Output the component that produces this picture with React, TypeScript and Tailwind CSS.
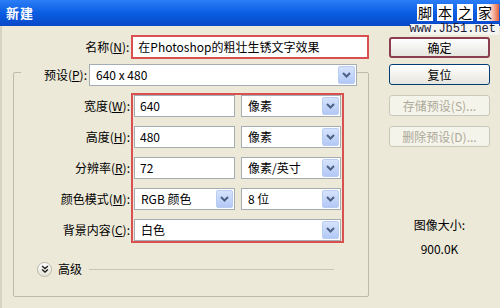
import React from "react";

const font = { fontFamily: '"Noto Sans CJK SC", "Noto Sans", sans-serif' };

function Arrow() {
    return (
        <div className="absolute right-[1px] top-[1px] bottom-[1px] w-[17px] rounded-[2px] bg-gradient-to-b from-[#D6E3FC] to-[#B2C8F5] border border-[#B9CCF2] flex items-center justify-center">
            <svg width="9" height="6" viewBox="0 0 9 6">
                <path d="M1 1 L4.5 4.5 L8 1" stroke="#4D6185" strokeWidth="2" fill="none" />
            </svg>
        </div>
    );
}

function Select({ value, w }: { value: string; w: string }) {
    return (
        <div className={`relative h-[22px] ${w} bg-white border border-[#A5ACB2] flex items-center pl-[6px] text-[12px] text-black`}>
            {value}
            <Arrow />
        </div>
    );
}

function Field({ value }: { value: string }) {
    return (
        <div className="h-[22px] w-[101px] bg-white border border-[#A5ACB2] flex items-center pl-[5px] text-[12px] text-black">
            {value}
        </div>
    );
}

function Label({ text, k }: { text: string; k: string }) {
    return (
        <div className="h-[22px] flex items-center justify-end text-[12px] text-black">
            {text}(<span className="underline">{k}</span>):
        </div>
    );
}

function XpButton({ children, disabled, primary }: { children: React.ReactNode; disabled?: boolean; primary?: boolean }) {
    if (disabled) {
        return (
            <div className="h-[21px] w-[101px] rounded-[3px] border border-[#CAC8BB] bg-[#F5F4EA] flex items-center justify-center text-[12px] text-[#ACA899]">
                {children}
            </div>
        );
    }
    return (
        <div className={`h-[21px] w-[101px] rounded-[3px] ${primary ? "border-2 border-[#8A3E50]" : "border border-[#003C74]"} bg-gradient-to-b from-white to-[#E6E5DE] flex items-center justify-center text-[12px] text-black`}>
            {children}
        </div>
    );
}

export default function App() {
    return (
        <div className="w-[500px] h-[308px] overflow-hidden relative bg-[#ECE9D8]" style={font}>
            {/* title bar */}
            <div className="h-[26px] bg-gradient-to-b from-[#2B7DF7] via-[#0A5DE2] to-[#0848C8] flex items-center pl-[6px]">
                <span className="text-white font-bold text-[13px] tracking-[1px]">新建</span>
            </div>

            {/* watermark */}
            <div className="absolute right-[1px] top-[4px] flex flex-col items-end">
                <div className="flex gap-[4px]">
                    <span className="bg-white text-black text-[14px] leading-[17px] px-[1px]">脚</span>
                    <span className="bg-white text-black text-[14px] leading-[17px] px-[1px]">本</span>
                    <span className="bg-white text-black text-[14px] leading-[17px] px-[1px]">之</span>
                    <span className="bg-gradient-to-r from-white via-white to-[#E0603A] text-black text-[14px] leading-[17px] pl-[1px] pr-[7px]">家</span>
                </div>
                <div className="mt-[3px] bg-[#F4F4F0] text-[#1A1A3A] text-[12px] leading-[11px] pr-[3px]" style={{ fontFamily: '"Liberation Mono", monospace' }}>
                    www.Jb51.net
                </div>
            </div>

            <div className="flex border-l-2 border-[#D6D3C4] h-[282px]">
                {/* left column */}
                <div className="w-[367px] flex flex-col">
                    <div className="flex items-center mt-[9px]">
                        <div className="w-[128px] text-right text-[12px] text-black">
                            名称(<span className="underline">N</span>):
                        </div>
                        <div className="ml-[2px] h-[24px] w-[239px] border-2 border-[#D85050] bg-white flex items-center pl-[5px] text-[12px] text-black">
                            在Photoshop的粗壮生锈文字效果
                        </div>
                    </div>

                    <div className="mt-[13px] ml-[11px] w-[356px] h-[225px] border border-[#BDBBAC] rounded-[2px] flex flex-col">
                        <div className="-mt-[9px] flex items-center">
                            <div className="ml-[7px] w-[68px] h-[22px] bg-[#ECE9D8] flex items-center justify-end pr-[2px] text-[12px] text-black">
                                预设(<span className="underline">P</span>):
                            </div>
                            <Select value="640 x 480" w="w-[268px]" />
                        </div>

                        <div className="mt-[7px] flex">
                            <div className="w-[117px] pr-[1px] pt-[2px] flex flex-col gap-[9px]">
                                <Label text="宽度" k="W" />
                                <Label text="高度" k="H" />
                                <Label text="分辨率" k="R" />
                                <Label text="颜色模式" k="M" />
                                <Label text="背景内容" k="C" />
                            </div>
                            <div className="w-[213px] h-[150px] border-2 border-[#D85050] px-[1px] flex flex-col gap-[9px]">
                                <div className="flex gap-[6px]">
                                    <Field value="640" />
                                    <Select value="像素" w="w-[100px]" />
                                </div>
                                <div className="flex gap-[6px]">
                                    <Field value="480" />
                                    <Select value="像素" w="w-[100px]" />
                                </div>
                                <div className="flex gap-[6px]">
                                    <Field value="72" />
                                    <Select value="像素/英寸" w="w-[100px]" />
                                </div>
                                <div className="flex gap-[6px]">
                                    <Select value="RGB 颜色" w="w-[101px]" />
                                    <Select value="8 位" w="w-[100px]" />
                                </div>
                                <div className="flex">
                                    <Select value="白色" w="w-[207px]" />
                                </div>
                            </div>
                        </div>

                        <div className="mt-[18px] flex items-center h-[16px]">
                            <div className="ml-[23px] w-[15px] h-[15px] rounded-full border border-[#B8B6A8] bg-gradient-to-b from-white to-[#E4E2D6] flex items-center justify-center">
                                <svg width="8" height="8" viewBox="0 0 8 8">
                                    <path d="M1 1 L4 3.5 L7 1 M1 4.5 L4 7 L7 4.5" stroke="#222" strokeWidth="1.4" fill="none" />
                                </svg>
                            </div>
                            <span className="ml-[6px] text-[12px] text-black">高级</span>
                            <div className="ml-[7px] w-[245px] h-0 border-t border-[#C8C6B8]" />
                        </div>
                    </div>
                </div>

                {/* right column */}
                <div className="ml-[20px] flex flex-col">
                    <div className="mt-[11px]">
                        <XpButton primary>确定</XpButton>
                    </div>
                    <div className="mt-[6px]">
                        <XpButton>复位</XpButton>
                    </div>
                    <div className="mt-[10px]">
                        <XpButton disabled>存储预设(S)...</XpButton>
                    </div>
                    <div className="mt-[10px]">
                        <XpButton disabled>删除预设(D)...</XpButton>
                    </div>
                    <div className="mt-[72px] w-[101px] text-center text-[12px] leading-[12px] text-black">图像大小:</div>
                    <div className="mt-[12px] w-[101px] text-center text-[12px] leading-[12px] text-black">900.0K</div>
                </div>
            </div>
        </div>
    );
}
